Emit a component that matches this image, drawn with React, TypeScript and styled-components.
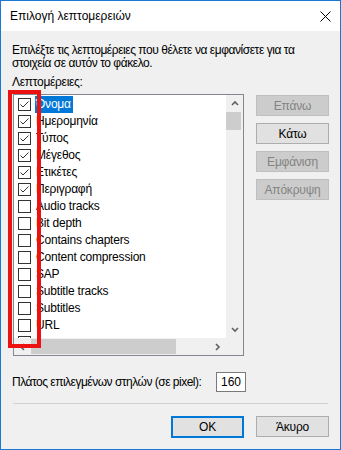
import React from "react";
import styled, { createGlobalStyle } from "styled-components";

const Global = createGlobalStyle`
  html, body { margin: 0; padding: 0; background: #ffffff; }
  body { font-family: "Liberation Sans", "DejaVu Sans", sans-serif; font-size: 12px; color: #000; }
  * { box-sizing: border-box; }
`;

const Window = styled.div`
  position: relative;
  width: 341px;
  height: 450px;
  border: 1px solid #1979d4;
  background: #f0f0f0;
  display: flex;
  flex-direction: column;
  overflow: hidden;
`;

const TitleBar = styled.div`
  height: 30px;
  background: #ffffff;
  display: flex;
  align-items: center;
  justify-content: space-between;
  padding: 0 9px 0 9px;
`;

const Title = styled.span`
  font-size: 12px;
  color: #000;
  margin-top: -1px;
`;

const Body = styled.div`
  flex: 1;
  display: flex;
  flex-direction: column;
  padding: 13px 11px 0 12px;
`;

const Description = styled.div`
  line-height: 13px;
  margin-left: -1px;
  letter-spacing: -0.45px;
  white-space: nowrap;
`;

const FieldLabel = styled.div`
  margin-top: 6px;
  line-height: 13px;
  margin-left: -1px;
  letter-spacing: -0.3px;
`;

const MainRow = styled.div`
  margin-top: 5px;
  display: flex;
  gap: 12px;
`;

const ListBox = styled.div`
  width: 233px;
  height: 262px;
  border: 1px solid #828790;
  background: #ffffff;
  display: grid;
  grid-template-columns: 1fr 17px;
  grid-template-rows: 1fr 17px;
`;

const ListContent = styled.div`
  overflow: hidden;
  padding: 1px 0 0 4px;
`;

const Row = styled.div`
  height: 17px;
  display: flex;
  align-items: center;
  white-space: nowrap;
`;

const CheckBox = styled.span`
  width: 13px;
  height: 13px;
  border: 1px solid #333333;
  background: #ffffff;
  margin-right: 4px;
  flex: none;
  display: flex;
  align-items: center;
  justify-content: center;
`;

const ItemText = styled.span<{ $selected?: boolean }>`
  height: 17px;
  line-height: 17px;
  padding: 0 2px 0 1px;
  letter-spacing: -0.2px;
  background: ${(p) => (p.$selected ? "#0078d7" : "transparent")};
  color: ${(p) => (p.$selected ? "#ffffff" : "#000000")};
`;

const VScroll = styled.div`
  background: #f0f0f0;
  display: flex;
  flex-direction: column;
`;

const HScroll = styled.div`
  background: #f0f0f0;
  display: flex;
`;

const Corner = styled.div`
  background: #f0f0f0;
`;

const ArrowBox = styled.div`
  width: 17px;
  height: 17px;
  flex: none;
  display: flex;
  align-items: center;
  justify-content: center;
`;

const VTrack = styled.div`
  flex: 1;
`;

const VThumb = styled.div`
  height: 18px;
  margin: 0 2px 0 0;
  background: #cdcdcd;
`;

const HTrack = styled.div`
  flex: 1;
  padding: 1px 0;
`;

const HThumb = styled.div`
  width: 145px;
  height: 100%;
  background: #cdcdcd;
`;

const SideButtons = styled.div`
  padding-top: 1px;
  display: flex;
  flex-direction: column;
  gap: 7px;
`;

const Button = styled.button<{ $disabled?: boolean; $default?: boolean; $w?: number }>`
  width: ${(p) => p.$w ?? 73}px;
  height: ${(p) => (p.$default ? 22 : 21)}px;
  font-family: "Liberation Sans", "DejaVu Sans", sans-serif;
  font-size: 12px;
  letter-spacing: -0.2px;
  padding: 0;
  background: ${(p) => (p.$disabled ? "#cccccc" : "#e1e1e1")};
  color: ${(p) => (p.$disabled ? "#838383" : "#000000")};
  border: ${(p) =>
    p.$default ? "2px solid #0078d7" : p.$disabled ? "1px solid #bfbfbf" : "1px solid #adadad"};
  border-radius: 0;
`;

const WidthRow = styled.div`
  margin-top: 16px;
  width: 233px;
  display: flex;
  align-items: center;
  justify-content: space-between;
`;

const WidthLabel = styled.span`
  margin-left: -1px;
  white-space: nowrap;
  letter-spacing: -0.5px;
`;

const NumberInput = styled.div`
  width: 30px;
  height: 20px;
  border: 1px solid #7a7a7a;
  background: #ffffff;
  display: flex;
  align-items: center;
  justify-content: flex-end;
  padding-right: 4px;
`;

const Separator = styled.div`
  margin-top: 11px;
  height: 1px;
  background: #d2d2d2;
  margin-right: 1px;
`;

const Footer = styled.div`
  margin-top: 12px;
  display: flex;
  justify-content: flex-end;
  gap: 12px;
`;

const Annotation = styled.div`
  position: absolute;
  left: 7px;
  top: 89px;
  width: 33px;
  height: 258px;
  border: 4px solid #ee1111;
  pointer-events: none;
`;

const Chevron = ({ dir }: { dir: "up" | "down" | "left" | "right" }) => {
  const pts: Record<string, string> = {
    up: "1,5 4,2 7,5",
    down: "1,2 4,5 7,2",
    left: "5,1 2,4 5,7",
    right: "2,1 5,4 2,7",
  };
  return (
    <svg width="8" height="8" viewBox="0 0 8 8">
      <polyline points={pts[dir]} fill="none" stroke="#606060" strokeWidth="1.6" />
    </svg>
  );
};

const Check = () => (
  <svg width="11" height="11" viewBox="0 0 11 11">
    <polyline points="1.5,5.5 4,8 9.5,2.5" fill="none" stroke="#333333" strokeWidth="1" />
  </svg>
);

const items: { label: string; checked: boolean }[] = [
  { label: "Όνομα", checked: true },
  { label: "Ημερομηνία", checked: true },
  { label: "Τύπος", checked: true },
  { label: "Μέγεθος", checked: true },
  { label: "Ετικέτες", checked: true },
  { label: "Περιγραφή", checked: true },
  { label: "Audio tracks", checked: false },
  { label: "Bit depth", checked: false },
  { label: "Contains chapters", checked: false },
  { label: "Content compression", checked: false },
  { label: "SAP", checked: false },
  { label: "Subtitle tracks", checked: false },
  { label: "Subtitles", checked: false },
  { label: "URL", checked: false },
  { label: "", checked: false },
];

export default function App() {
  return (
    <>
      <Global />
      <Window>
        <TitleBar>
          <Title>Επιλογή λεπτομερειών</Title>
          <svg width="11" height="11" viewBox="0 0 11 11">
            <path d="M0.5 0.5 L10.5 10.5 M10.5 0.5 L0.5 10.5" stroke="#000" strokeWidth="1" />
          </svg>
        </TitleBar>
        <Body>
          <Description>
            Επιλέξτε τις λεπτομέρειες που θέλετε να εμφανίσετε για τα
            <br />
            στοιχεία σε αυτόν το φάκελο.
          </Description>
          <FieldLabel>Λεπτομέρειες:</FieldLabel>
          <MainRow>
            <ListBox>
              <ListContent>
                {items.map((it, i) => (
                  <Row key={i}>
                    <CheckBox>{it.checked && <Check />}</CheckBox>
                    {it.label && <ItemText $selected={i === 0}>{it.label}</ItemText>}
                  </Row>
                ))}
              </ListContent>
              <VScroll>
                <ArrowBox>
                  <Chevron dir="up" />
                </ArrowBox>
                <VTrack>
                  <VThumb />
                </VTrack>
                <ArrowBox>
                  <Chevron dir="down" />
                </ArrowBox>
              </VScroll>
              <HScroll>
                <ArrowBox>
                  <Chevron dir="left" />
                </ArrowBox>
                <HTrack>
                  <HThumb />
                </HTrack>
                <ArrowBox>
                  <Chevron dir="right" />
                </ArrowBox>
              </HScroll>
              <Corner />
            </ListBox>
            <SideButtons>
              <Button $disabled>Επάνω</Button>
              <Button>Κάτω</Button>
              <Button $disabled>Εμφάνιση</Button>
              <Button $disabled>Απόκρυψη</Button>
            </SideButtons>
          </MainRow>
          <WidthRow>
            <WidthLabel>Πλάτος επιλεγμένων στηλών (σε pixel):</WidthLabel>
            <NumberInput>160</NumberInput>
          </WidthRow>
          <Separator />
          <Footer>
            <Button $default>OK</Button>
            <Button $w={73}>Άκυρο</Button>
          </Footer>
        </Body>
        <Annotation />
      </Window>
    </>
  );
}
